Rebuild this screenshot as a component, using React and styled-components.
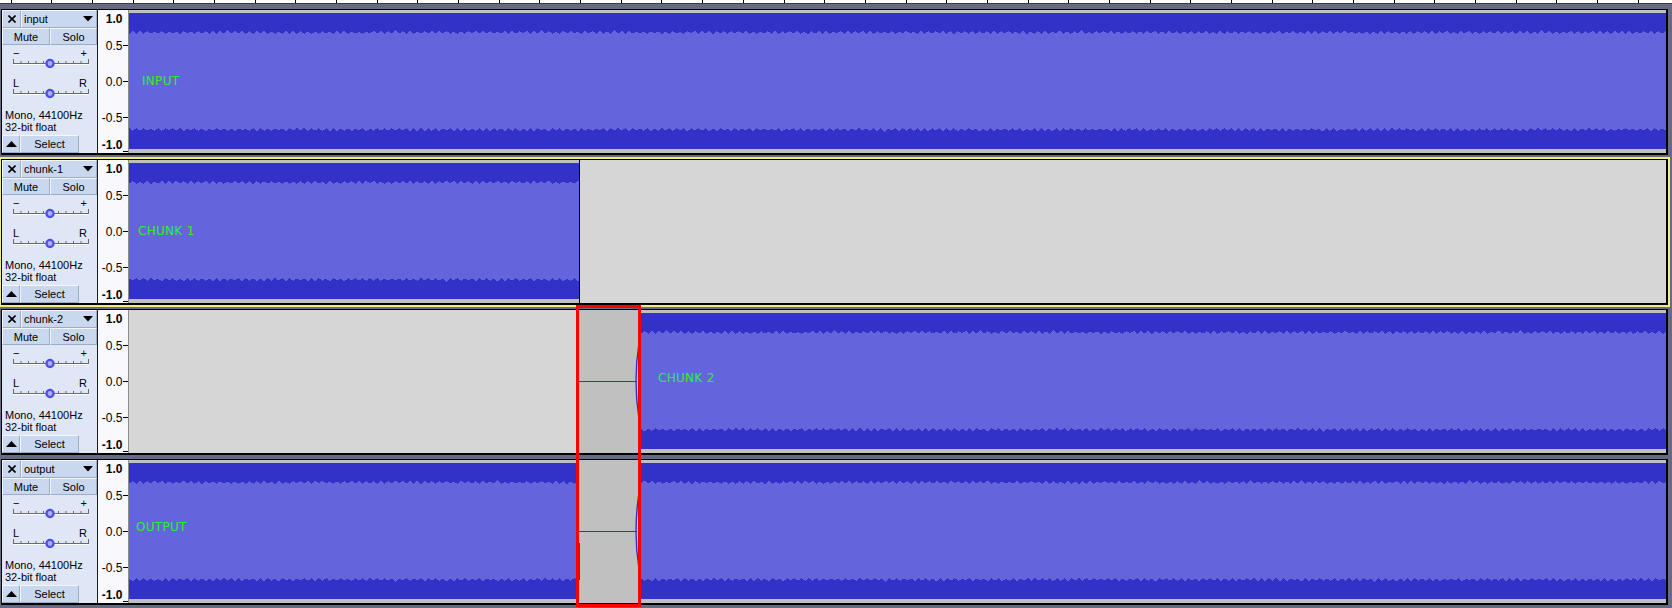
import React from 'react';
import styled, { createGlobalStyle } from 'styled-components';

const GlobalStyle = createGlobalStyle`
  html, body {
    margin: 0;
    padding: 0;
    overflow: hidden;
    background: #646b83;
  }
  body {
    font-family: "Liberation Sans", Arial, sans-serif;
  }
`;

const Window = styled.div`
  width: 1672px;
  height: 608px;
  background: #646b83;
  display: flex;
  flex-direction: column;
  overflow: hidden;
`;

const TimeRuler = styled.div`
  flex: none;
  height: 3px;
  background-color: #fff;
  background-image: repeating-linear-gradient(
    to right,
    transparent 0,
    transparent 10.6px,
    #000 10.6px,
    #000 11.6px,
    transparent 11.6px,
    transparent 40.68px
  );
  border-bottom: 1px solid #3a3d48;
`;

const TrackList = styled.div`
  position: relative;
  display: flex;
  flex-direction: column;
  gap: 4px;
  padding-top: 5px;
`;

const Track = styled.div`
  display: flex;
  height: 143px;
  margin: 0 4px 0 1px;
  border: 1px solid #000;
  border-right-width: 2px;
  border-bottom-width: 2px;
  ${({ $focused }) => $focused && `
    outline: 2px solid #eeee78;
  `}
`;

const Panel = styled.div`
  width: 95px;
  flex: none;
  display: flex;
  flex-direction: column;
  background: #dfe7f7;
  border-right: 1px solid #1c1c1c;
  font-size: 11px;
  color: #000;
`;

const PanelRow = styled.div`
  display: flex;
  flex: none;
  height: ${({ $h }) => $h}px;
  ${({ $bottom }) => $bottom && 'margin-top: auto;'}
`;

const PanelButton = styled.div`
  box-sizing: border-box;
  display: flex;
  align-items: center;
  justify-content: ${({ $align }) => $align || 'center'};
  width: ${({ $w }) => ($w ? `${$w}px` : 'auto')};
  flex: ${({ $w }) => ($w ? 'none' : 1)};
  padding: ${({ $pad }) => $pad || '0'};
  background: #c9d7ef;
  border: 1px solid;
  border-color: #f3f6fc #9cabc6 #9cabc6 #f3f6fc;
  white-space: nowrap;
`;

const TrackName = styled.span`
  flex: 1;
`;

const SliderBlock = styled.div`
  display: flex;
  flex-direction: column;
  padding: 3px 10px 0 11px;
`;

const SliderLabels = styled.div`
  display: flex;
  justify-content: space-between;
  height: 10px;
  line-height: 10px;
  margin-top: ${({ $mt }) => $mt || 0}px;
`;

const SliderSvg = styled.svg`
  display: block;
  overflow: visible;
`;

const Info = styled.div`
  padding-left: 3px;
  margin-top: 11px;
  line-height: 12px;
`;

const Ruler = styled.div`
  width: 30px;
  flex: none;
  background: #f8f8fd;
  border-right: 1px solid #8c8c8c;
`;

const WaveArea = styled.div`
  flex: 1;
  min-width: 0;
  display: flex;
  background: #d6d6d6;
`;

const Clip = styled.div`
  position: relative;
  flex: none;
  width: ${({ $w }) => $w}px;
  ${({ $edge }) => $edge && 'border-right: 1px solid #000;'}
`;

const Empty = styled.div`
  flex: ${({ $w }) => ($w ? 'none' : 1)};
  width: ${({ $w }) => ($w ? `${$w}px` : 'auto')};
`;

const Selected = styled.div`
  flex: none;
  width: 65px;
  background: #c0c0c0;
`;

const ClipLabel = styled.span`
  position: absolute;
  left: ${({ $x }) => $x}px;
  top: ${({ $y }) => $y}px;
  transform: translateY(-50%);
  color: #2cf02c;
  font-family: "DejaVu Sans", sans-serif;
  font-size: 12px;
  line-height: 13px;
  letter-spacing: 0.3px;
`;

const SelectionBox = styled.div`
  position: absolute;
  left: 576px;
  top: 301px;
  width: 65px;
  height: 302px;
  box-sizing: border-box;
  border: 3px solid #ff0000;
  pointer-events: none;
`;

const DARK = '#3232c8';
const LIGHT = '#6464dc';

function rmsPoints(w, seed) {
  const top = [];
  const bottom = [];
  let i = 0;
  for (let x = 0; x <= w + 3.6; x += 3.65, i++) {
    const r = Math.abs(Math.sin((i + seed) * 12.9898) * 43758.5453) % 1;
    const up = i % 2 ? 2.2 + r * 1.4 : r * 0.5;
    const r2 = Math.abs(Math.sin((i + seed) * 78.233) * 12543.77) % 1;
    const down = i % 2 ? 2.2 + r2 * 1.4 : r2 * 0.5;
    top.push(`${x.toFixed(1)},${(24 - up).toFixed(1)}`);
    bottom.unshift(`${x.toFixed(1)},${(118 + down).toFixed(1)}`);
  }
  return top.concat(bottom).join(' ');
}

function Wave({ w, seed }) {
  return (
    <svg width={w} height={143} style={{ display: 'block' }} shapeRendering="crispEdges">
      <rect x="0" y="0" width={w} height="143" fill="#c0c0c0" />
      <rect x="0" y="3" width={w} height="136" fill={DARK} />
      <polygon points={rmsPoints(w, seed)} fill={LIGHT} />
    </svg>
  );
}

function Fade({ tail }) {
  return (
    <svg width={65} height={143} style={{ display: 'block' }}>
      <line x1="3" y1="71.5" x2="61" y2="71.5" stroke={DARK} strokeWidth="1" />
      <path d="M 63 33 Q 57 71 63 109" fill="none" stroke={DARK} strokeWidth="1.4" />
      {tail && <line x1="3.5" y1="83" x2="3.5" y2="120" stroke={DARK} strokeWidth="1" />}
    </svg>
  );
}

function Slider() {
  const ticks = [];
  for (let i = 0; i <= 10; i++) {
    const x = 0.5 + i * 7.5;
    const end = i === 0 || i === 10;
    ticks.push(<line key={i} x1={x} y1={end ? 1 : 3} x2={x} y2="5.5" stroke="#6a6a6a" strokeWidth="1" />);
  }
  return (
    <SliderSvg width="76" height="10">
      <line x1="0" y1="5.5" x2="76" y2="5.5" stroke="#6a6a6a" strokeWidth="1" />
      <line x1="0" y1="6.5" x2="76" y2="6.5" stroke="#ffffff" strokeWidth="1" />
      {ticks}
      <circle cx="37" cy="5.5" r="3.6" fill="#a9aef5" stroke="#4e4ee8" strokeWidth="2.3" />
    </SliderSvg>
  );
}

function VRuler() {
  const labels = [
    { t: '1.0', y: 12.8, bold: true },
    { t: '0.5', y: 39.6 },
    { t: '0.0', y: 75.6 },
    { t: '-0.5', y: 111.8 },
    { t: '-1.0', y: 139, bold: true },
  ];
  return (
    <svg width="30" height="143" style={{ display: 'block' }}>
      {labels.map((l) => (
        <text
          key={l.t}
          x="24.5"
          y={l.y}
          textAnchor="end"
          fontFamily='"Liberation Sans", Arial, sans-serif'
          fontSize="12"
          fontWeight={l.bold ? 'bold' : 'normal'}
          fill="#000"
        >
          {l.t}
        </text>
      ))}
      {[35.5, 71.5, 107.5, 141.5].map((y) => (
        <line key={y} x1="25" y1={y} x2="30" y2={y} stroke="#000" strokeWidth="1" />
      ))}
    </svg>
  );
}

function TrackPanel({ name }) {
  return (
    <Panel>
      <PanelRow $h={18}>
        <PanelButton $w={19}>
          <svg width="8" height="8">
            <line x1="0.5" y1="0.5" x2="7.5" y2="7.5" stroke="#000" strokeWidth="1.6" />
            <line x1="7.5" y1="0.5" x2="0.5" y2="7.5" stroke="#000" strokeWidth="1.6" />
          </svg>
        </PanelButton>
        <PanelButton $align="flex-start" $pad="0 3px 0 2px">
          <TrackName>{name}</TrackName>
          <svg width="10" height="6">
            <polygon points="0,0 10,0 5,5.5" fill="#000" />
          </svg>
        </PanelButton>
      </PanelRow>
      <PanelRow $h={17}>
        <PanelButton $w={48}>Mute</PanelButton>
        <PanelButton>Solo</PanelButton>
      </PanelRow>
      <SliderBlock>
        <SliderLabels>
          <span>−</span>
          <span>+</span>
        </SliderLabels>
        <Slider />
        <SliderLabels $mt={10}>
          <span>L</span>
          <span>R</span>
        </SliderLabels>
        <Slider />
      </SliderBlock>
      <Info>
        Mono, 44100Hz
        <br />
        32-bit float
      </Info>
      <PanelRow $h={18} $bottom>
        <PanelButton $w={18}>
          <svg width="11" height="6">
            <polygon points="0,6 11,6 5.5,0" fill="#000" />
          </svg>
        </PanelButton>
        <PanelButton $w={59}>Select</PanelButton>
      </PanelRow>
    </Panel>
  );
}

const tracks = [
  {
    name: 'input',
    segments: [{ kind: 'clip', w: 1537, label: 'INPUT', lx: 13, ly: 71 }],
  },
  {
    name: 'chunk-1',
    focused: true,
    segments: [
      { kind: 'clip', w: 450, edge: true, label: 'CHUNK 1', lx: 9, ly: 71 },
      { kind: 'empty' },
    ],
  },
  {
    name: 'chunk-2',
    segments: [
      { kind: 'empty', w: 447 },
      { kind: 'sel' },
      { kind: 'clip', w: 1025, label: 'CHUNK 2', lx: 17, ly: 68 },
    ],
  },
  {
    name: 'output',
    segments: [
      { kind: 'clip', w: 447, label: 'OUTPUT', lx: 7, ly: 67 },
      { kind: 'sel', tail: true },
      { kind: 'clip', w: 1025 },
    ],
  },
];

function Segment({ seg, seed }) {
  if (seg.kind === 'empty') return <Empty $w={seg.w} />;
  if (seg.kind === 'sel') {
    return (
      <Selected>
        <Fade tail={seg.tail} />
      </Selected>
    );
  }
  return (
    <Clip $w={seg.w} $edge={seg.edge}>
      <Wave w={seg.w} seed={seed} />
      {seg.label && (
        <ClipLabel $x={seg.lx} $y={seg.ly}>
          {seg.label}
        </ClipLabel>
      )}
    </Clip>
  );
}

export default function App() {
  return (
    <Window>
      <GlobalStyle />
      <TimeRuler />
      <TrackList>
        {tracks.map((t, ti) => (
          <Track key={t.name} $focused={t.focused}>
            <TrackPanel name={t.name} />
            <Ruler>
              <VRuler />
            </Ruler>
            <WaveArea>
              {t.segments.map((s, si) => (
                <Segment key={si} seg={s} seed={ti * 7 + si * 3} />
              ))}
            </WaveArea>
          </Track>
        ))}
        <SelectionBox />
      </TrackList>
    </Window>
  );
}
